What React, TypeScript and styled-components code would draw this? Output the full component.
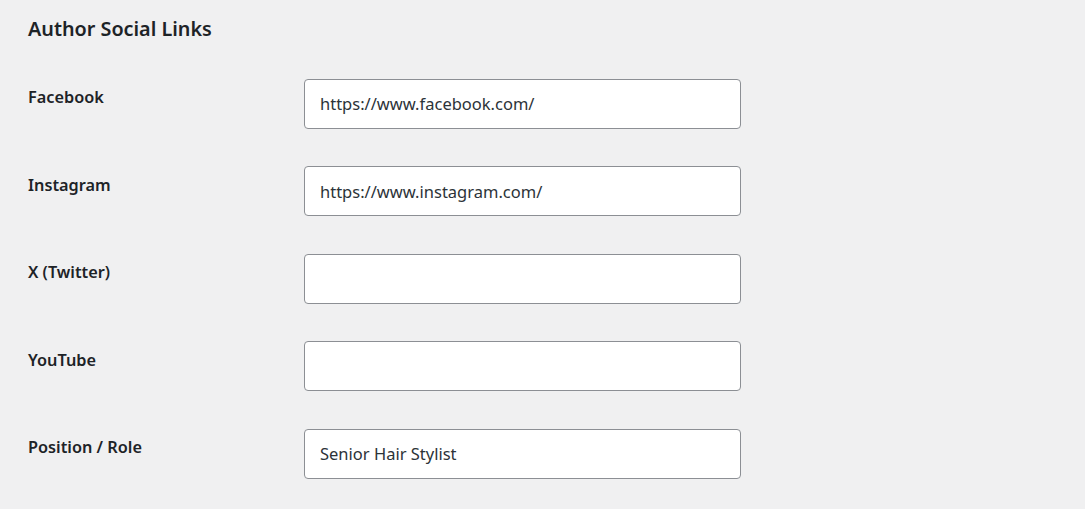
import React from 'react';
import styled, { createGlobalStyle } from 'styled-components';

const GlobalStyle = createGlobalStyle`
  html, body {
    margin: 0;
    padding: 0;
    background: #f0f0f1;
  }
  body {
    font-family: "Noto Sans", "Open Sans", Arial, sans-serif;
    color: #1d2327;
  }
`;

type Field = {
  label: string;
  value: string;
};

const fields: Field[] = [
  { label: 'Facebook', value: 'https://www.facebook.com/' },
  { label: 'Instagram', value: 'https://www.instagram.com/' },
  { label: 'X (Twitter)', value: '' },
  { label: 'YouTube', value: '' },
  { label: 'Position / Role', value: 'Senior Hair Stylist' },
];

function App() {
  return (
    <>
      <GlobalStyle />
      <Wrapper>
        <Heading>Author Social Links</Heading>
        <Table>
          {fields.map(({ label, value }) => (
            <Row key={label}>
              <Label>{label}</Label>
              <Cell>
                <Input type="text" defaultValue={value} />
              </Cell>
            </Row>
          ))}
        </Table>
      </Wrapper>
    </>
  );
}

export default App;

const Wrapper = styled.div`
  padding: 0 28px;
`;
const Heading = styled.h2`
  margin: 14px 0 16px;
  font-size: 19.8px;
  line-height: 30px;
  font-weight: 600;
  color: #1d2327;
`;
const Table = styled.div`
  display: flex;
  flex-direction: column;
`;
const Row = styled.div`
  display: flex;
  align-items: flex-start;
  padding: 18.75px 0;
`;
const Label = styled.label`
  width: 276px;
  flex-shrink: 0;
  padding-top: 7.5px;
  font-size: 16.3px;
  line-height: 23px;
  font-weight: 600;
  color: #1d2327;
`;
const Cell = styled.div`
  display: flex;
`;
const Input = styled.input`
  box-sizing: border-box;
  width: 437px;
  height: 50px;
  padding: 0 15px;
  border: 1px solid #8c8f94;
  border-radius: 4px;
  background: #fff;
  font-family: "Noto Sans", "Open Sans", Arial, sans-serif;
  font-size: 16.5px;
  color: #2c3338;
  outline: none;
`;
